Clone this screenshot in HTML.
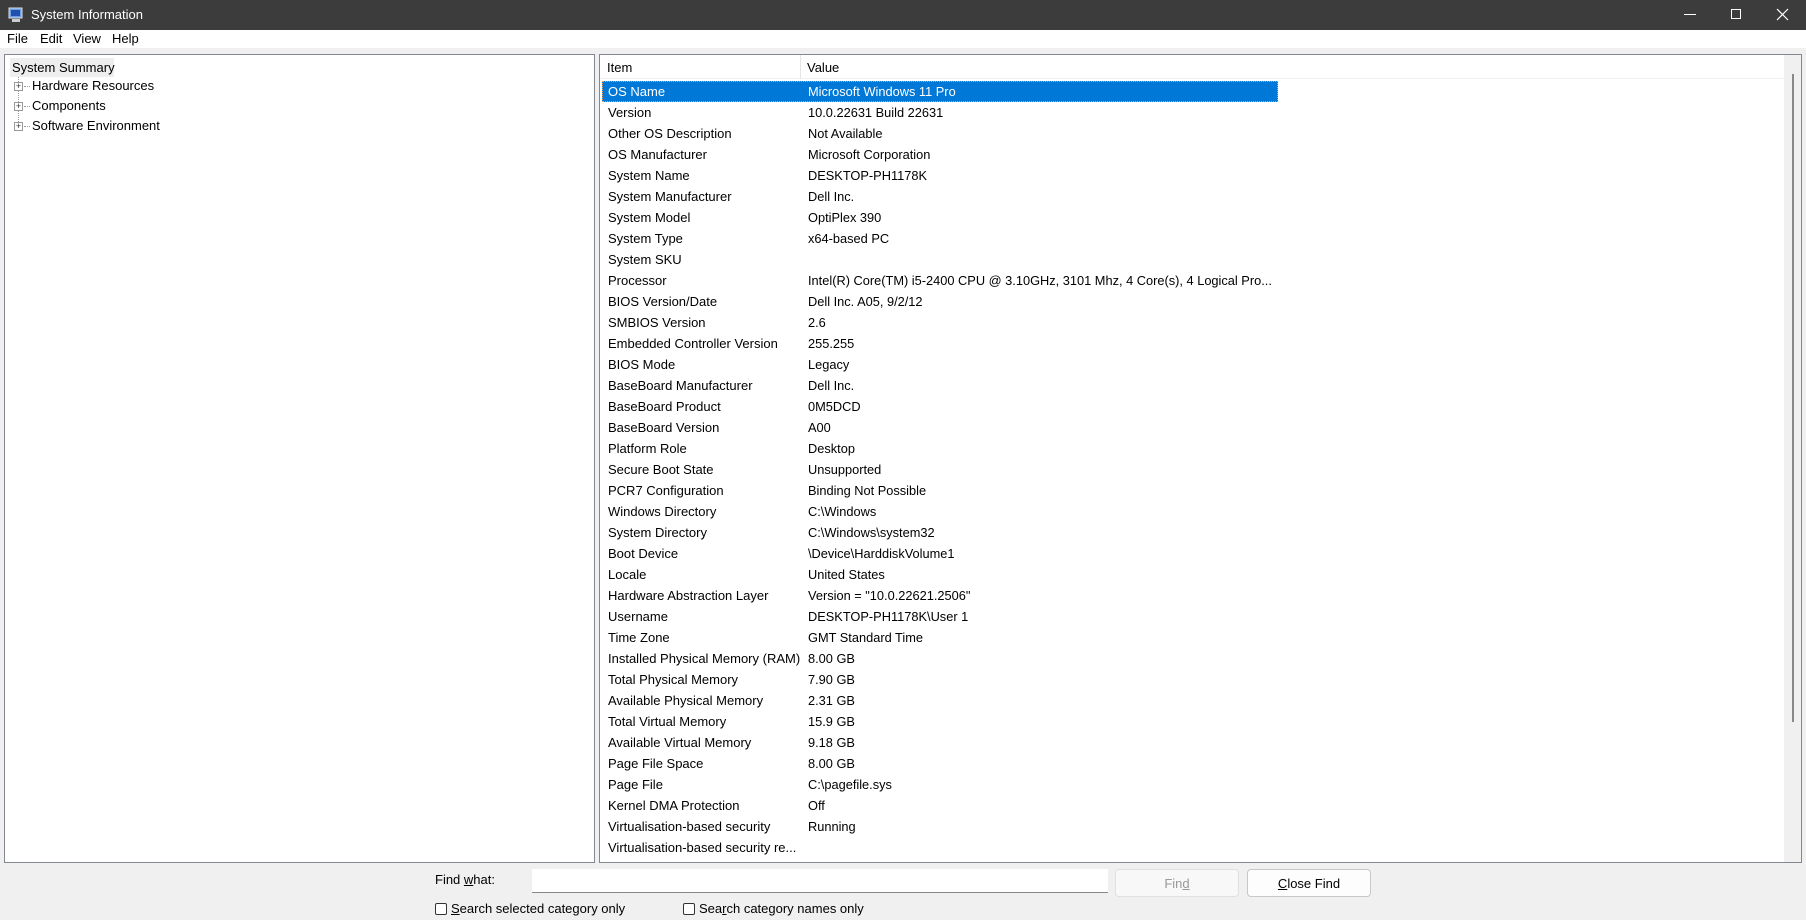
<!DOCTYPE html>
<html><head><meta charset="utf-8"><style>
*{margin:0;padding:0;box-sizing:border-box}
body{width:1806px;height:920px;background:#f0f0f0;font-family:"Liberation Sans",sans-serif;font-size:13px;color:#000;position:relative;overflow:hidden}
.abs{position:absolute}
#title{left:0;top:0;width:1806px;height:30px;background:#3c3c3c;color:#fff}
#menu{left:0;top:30px;width:1806px;height:18px;background:#fff}
#menu span{position:absolute;top:1px}
.pane{background:#fff;border:1px solid #828790}
.r{position:absolute;left:0;height:21px;line-height:21px;white-space:nowrap}
.r .a{position:absolute;left:6px}
.r .b{position:absolute;left:206px;font-size:12.8px}
.sel{background:#0078d7;color:#fff;outline:1px dotted #f0a060;outline-offset:-1px}
.tree{position:absolute;left:27px;height:20px;line-height:20px}
.pb{position:absolute;width:9px;height:9px;border:1px solid #999;background:#fff;font-size:9px;line-height:7px;text-align:center;color:#333}
.btn{border:1px solid #c8c8c8;border-radius:4px;background:#fdfdfd;text-align:center;line-height:28px}
.cb{width:12px;height:12px;border:1px solid #333;border-radius:2px;background:#fff}
</style></head><body>
<div id="title" class="abs">
<svg class="abs" style="left:8px;top:7px" width="16" height="16"><rect x="1" y="1" width="13" height="10" fill="#6fa0e0" stroke="#dde" /><rect x="3" y="3" width="9" height="6" fill="#2050b0"/><rect x="4" y="12" width="8" height="3" fill="#ccc"/></svg>
<span class="abs" style="left:31px;top:7px;font-size:13px">System Information</span>
<div class="abs" style="left:1684px;top:14px;width:12px;height:1px;background:#fff"></div>
<div class="abs" style="left:1731px;top:9px;width:10px;height:10px;border:1px solid #fff"></div>
<svg class="abs" style="left:1776px;top:8px" width="13" height="13"><path d="M1 1L12 12M12 1L1 12" stroke="#fff" stroke-width="1.2"/></svg>
</div>
<div id="menu" class="abs"><span style="left:7px">File</span><span style="left:40px">Edit</span><span style="left:73px">View</span><span style="left:112px">Help</span></div>

<div class="abs pane" style="left:4px;top:54px;width:591px;height:809px">
<div class="abs" style="left:5px;top:3px;width:104px;height:19px;background:#eeeeee"></div>
<div class="abs" style="left:7px;top:3px;line-height:19px">System Summary</div>
<div class="abs" style="left:13px;top:22px;height:49px;border-left:1px dotted #999"></div>
<div class="pb" style="left:9px;top:27px">+</div><div class="abs" style="left:19px;top:31px;width:6px;border-top:1px dotted #999"></div><div class="tree" style="top:21px">Hardware Resources</div>
<div class="pb" style="left:9px;top:47px">+</div><div class="abs" style="left:19px;top:51px;width:6px;border-top:1px dotted #999"></div><div class="tree" style="top:41px">Components</div>
<div class="pb" style="left:9px;top:67px">+</div><div class="abs" style="left:19px;top:71px;width:6px;border-top:1px dotted #999"></div><div class="tree" style="top:61px">Software Environment</div>
</div>

<div class="abs pane" style="left:599px;top:54px;width:1203px;height:809px">
<div class="abs" style="left:0;top:0;width:1184px;height:24px;border-bottom:1px solid #f0f0f0"></div>
<div class="abs" style="left:7px;top:5px">Item</div>
<div class="abs" style="left:200px;top:0;height:24px;border-left:1px solid #e5e5e5"></div>
<div class="abs" style="left:207px;top:5px">Value</div>
<div class="abs" style="left:1184px;top:0;width:17px;height:807px;background:#f0f0f0"></div>
<div class="abs" style="left:1192px;top:19px;width:2px;height:648px;background:#888"></div>
<div class="abs" style="left:2px;top:26px;width:1180px">
<div class="r sel" style="top:0;width:676px"><span class="a">OS Name</span><span class="b">Microsoft Windows 11 Pro</span></div>
<div class="r" style="top:21px"><span class="a">Version</span><span class="b">10.0.22631 Build 22631</span></div>
<div class="r" style="top:42px"><span class="a">Other OS Description</span><span class="b">Not Available</span></div>
<div class="r" style="top:63px"><span class="a">OS Manufacturer</span><span class="b">Microsoft Corporation</span></div>
<div class="r" style="top:84px"><span class="a">System Name</span><span class="b">DESKTOP-PH1178K</span></div>
<div class="r" style="top:105px"><span class="a">System Manufacturer</span><span class="b">Dell Inc.</span></div>
<div class="r" style="top:126px"><span class="a">System Model</span><span class="b">OptiPlex 390</span></div>
<div class="r" style="top:147px"><span class="a">System Type</span><span class="b">x64-based PC</span></div>
<div class="r" style="top:168px"><span class="a">System SKU</span><span class="b"></span></div>
<div class="r" style="top:189px"><span class="a">Processor</span><span class="b">Intel(R) Core(TM) i5-2400 CPU @ 3.10GHz, 3101 Mhz, 4 Core(s), 4 Logical Pro...</span></div>
<div class="r" style="top:210px"><span class="a">BIOS Version/Date</span><span class="b">Dell Inc. A05, 9/2/12</span></div>
<div class="r" style="top:231px"><span class="a">SMBIOS Version</span><span class="b">2.6</span></div>
<div class="r" style="top:252px"><span class="a">Embedded Controller Version</span><span class="b">255.255</span></div>
<div class="r" style="top:273px"><span class="a">BIOS Mode</span><span class="b">Legacy</span></div>
<div class="r" style="top:294px"><span class="a">BaseBoard Manufacturer</span><span class="b">Dell Inc.</span></div>
<div class="r" style="top:315px"><span class="a">BaseBoard Product</span><span class="b">0M5DCD</span></div>
<div class="r" style="top:336px"><span class="a">BaseBoard Version</span><span class="b">A00</span></div>
<div class="r" style="top:357px"><span class="a">Platform Role</span><span class="b">Desktop</span></div>
<div class="r" style="top:378px"><span class="a">Secure Boot State</span><span class="b">Unsupported</span></div>
<div class="r" style="top:399px"><span class="a">PCR7 Configuration</span><span class="b">Binding Not Possible</span></div>
<div class="r" style="top:420px"><span class="a">Windows Directory</span><span class="b">C:\Windows</span></div>
<div class="r" style="top:441px"><span class="a">System Directory</span><span class="b">C:\Windows\system32</span></div>
<div class="r" style="top:462px"><span class="a">Boot Device</span><span class="b">\Device\HarddiskVolume1</span></div>
<div class="r" style="top:483px"><span class="a">Locale</span><span class="b">United States</span></div>
<div class="r" style="top:504px"><span class="a">Hardware Abstraction Layer</span><span class="b">Version = "10.0.22621.2506"</span></div>
<div class="r" style="top:525px"><span class="a">Username</span><span class="b">DESKTOP-PH1178K\User 1</span></div>
<div class="r" style="top:546px"><span class="a">Time Zone</span><span class="b">GMT Standard Time</span></div>
<div class="r" style="top:567px"><span class="a">Installed Physical Memory (RAM)</span><span class="b">8.00 GB</span></div>
<div class="r" style="top:588px"><span class="a">Total Physical Memory</span><span class="b">7.90 GB</span></div>
<div class="r" style="top:609px"><span class="a">Available Physical Memory</span><span class="b">2.31 GB</span></div>
<div class="r" style="top:630px"><span class="a">Total Virtual Memory</span><span class="b">15.9 GB</span></div>
<div class="r" style="top:651px"><span class="a">Available Virtual Memory</span><span class="b">9.18 GB</span></div>
<div class="r" style="top:672px"><span class="a">Page File Space</span><span class="b">8.00 GB</span></div>
<div class="r" style="top:693px"><span class="a">Page File</span><span class="b">C:\pagefile.sys</span></div>
<div class="r" style="top:714px"><span class="a">Kernel DMA Protection</span><span class="b">Off</span></div>
<div class="r" style="top:735px"><span class="a">Virtualisation-based security</span><span class="b">Running</span></div>
<div class="r" style="top:756px"><span class="a">Virtualisation-based security re...</span></div>
</div>
</div>

<div class="abs" style="left:435px;top:872px">Find <u>w</u>hat:</div>
<div class="abs" style="left:532px;top:869px;width:576px;height:24px;background:#fff;border-bottom:1px solid #888"></div>
<div class="abs btn" style="left:1115px;top:869px;width:124px;height:28px;color:#999;background:#f8f8f8;border-color:#e0e0e0">Fin<u>d</u></div>
<div class="abs btn" style="left:1247px;top:869px;width:124px;height:28px"><u>C</u>lose Find</div>
<div class="abs cb" style="left:435px;top:903px"></div>
<div class="abs" style="left:451px;top:901px"><u>S</u>earch selected category only</div>
<div class="abs cb" style="left:683px;top:903px"></div>
<div class="abs" style="left:699px;top:901px">Sea<u>r</u>ch category names only</div>
</body></html>
